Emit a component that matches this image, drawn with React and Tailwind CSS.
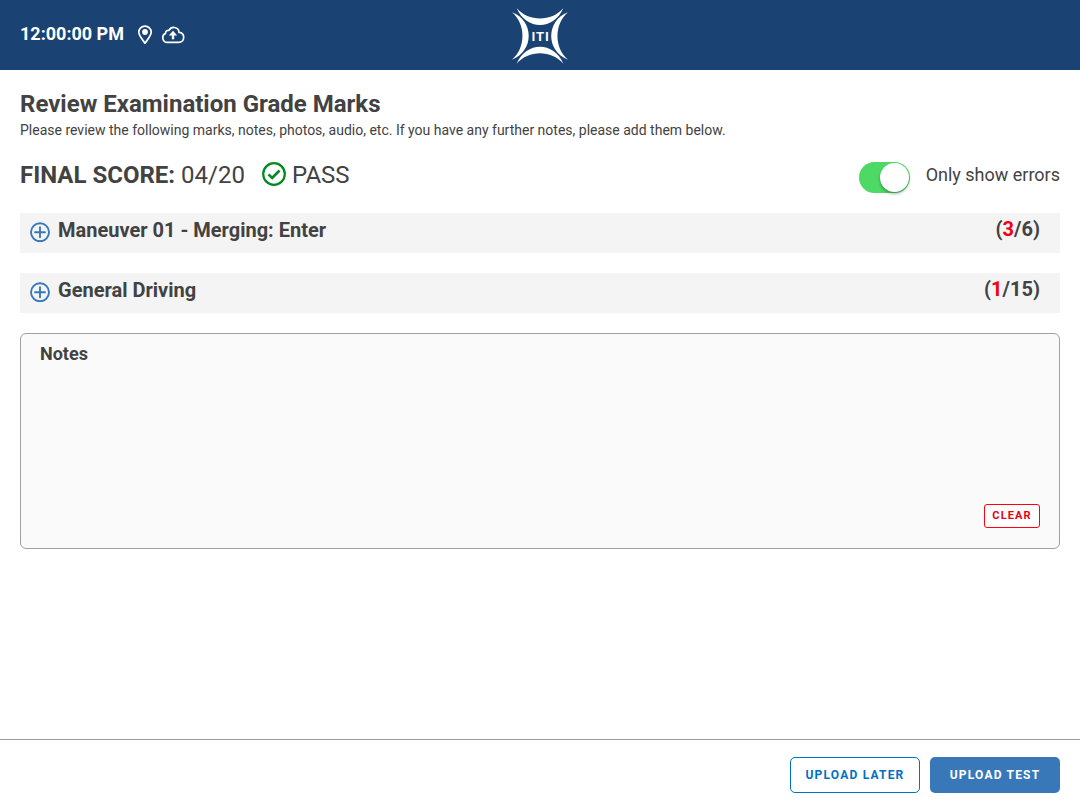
import { useState } from 'react';

const sections = [
  { id: 'maneuver-01', title: 'Maneuver 01 - Merging: Enter', errors: 3, total: 6 },
  { id: 'general', title: 'General Driving', errors: 1, total: 15 },
];

function Logo() {
  return (
    <svg className="size-[60px]" viewBox="30 15 180 180" fill="#fff" role="img" aria-label="ITI">
      <path d="M50 24 C85 66 155 66 190 24 C162 92 78 92 50 24Z" />
      <path d="M50 191 C85 149 155 149 190 191 C162 123 78 123 50 191Z" />
      <path d="M36 37 C78 72 78 144 36 179 C103 154 103 62 36 37Z" />
      <path d="M204 37 C162 72 162 144 204 179 C137 154 137 62 204 37Z" />
      <g fontSize="39" fontWeight="700" textAnchor="middle">
        <text x="100" y="122">I</text>
        <text x="120" y="122">T</text>
        <text x="141" y="122">I</text>
      </g>
    </svg>
  );
}

function PinIcon() {
  return (
    <svg className="h-5 w-4" viewBox="0 0 16 20" fill="none" stroke="#fff" strokeWidth="1.700" aria-hidden="true">
      <path d="M8 18.200C5.600 14.600 1.800 10.800 1.800 7.300a6.200 6.200 0 0 1 12.400 0c0 3.500-3.800 7.300-6.200 10.900Z" strokeLinejoin="round" />
      <circle cx="8" cy="7" r="2.900" fill="#fff" stroke="none" />
    </svg>
  );
}

function CloudIcon() {
  return (
    <svg className="h-5 w-6" viewBox="0 0 24 20" fill="none" stroke="#fff" strokeWidth="1.700" aria-hidden="true">
      <path d="M6.300 17.400a4.700 4.700 0 0 1-1.700-9C4.300 6.200 6.200 4.900 8 5.400 9.300 2.900 11.500 2.100 13.600 2.500c2.700.4 4.300 2.400 4.400 4.900 2.700.2 4.700 2.200 4.700 4.900 0 2.900-2.100 5.100-5 5.100Z" strokeLinejoin="round" />
      <path d="M12 14.300V8" strokeWidth="2.400" />
      <path d="M7.800 10.600 12 5.800l4.200 4.800Z" fill="#fff" stroke="none" />
    </svg>
  );
}

function PassIcon() {
  return (
    <svg className="size-6" viewBox="0 0 24 24" fill="none" stroke="#008a20" aria-hidden="true">
      <circle cx="12" cy="12" r="10.800" strokeWidth="2.200" />
      <path d="M6.500 12.300l3.700 3.700 7.300-7.500" strokeWidth="2.600" />
    </svg>
  );
}

function PlusIcon() {
  return (
    <svg className="size-5" viewBox="0 0 20 20" fill="none" stroke="#3878b8" strokeWidth="1.900" aria-hidden="true">
      <circle cx="10" cy="10.300" r="9" />
      <path d="M10 5.300v10M5 10.300h10" strokeLinecap="round" />
    </svg>
  );
}

function SectionRow({ section }) {
  return (
    <li className="flex h-10 items-start justify-between bg-[#f4f4f4] pr-5 pl-2.5 text-xl font-bold">
      <button type="button" className="flex items-start gap-2 text-left">
        <span className="pt-[9px]">
          <PlusIcon />
        </span>
        <span className="pt-[3px] leading-7">{section.title}</span>
      </button>
      <span className="pt-0.5 leading-7">
        (<span className="text-[#f2000f]">{section.errors}</span>/{section.total})
      </span>
    </li>
  );
}

export default function App() {
  const [onlyErrors, setOnlyErrors] = useState(true);
  const [notes, setNotes] = useState('');

  const visible = onlyErrors ? sections.filter((s) => s.errors > 0) : sections;

  return (
    <div className="flex min-h-screen flex-col bg-white font-[Roboto,sans-serif] text-[#424242]">
      <header className="grid h-[70px] grid-cols-[1fr_auto_1fr] items-center bg-[#1a4272] px-5 text-white">
        <div className="flex items-center">
          <time className="pb-0.5 text-lg font-bold">12:00:00 PM</time>
          <span className="ml-[13px] flex items-center gap-2">
            <PinIcon />
            <CloudIcon />
          </span>
        </div>
        <Logo />
      </header>

      <main className="flex-1 px-5 pt-5">
        <h1 className="text-2xl leading-7 font-bold">Review Examination Grade Marks</h1>
        <p className="mt-0.5 text-sm">
          Please review the following marks, notes, photos, audio, etc. If you have any further notes, please add them below.
        </p>

        <div className="mt-5 flex items-start justify-between">
          <div className="flex items-start text-2xl leading-[30px]">
            <p>
              <strong className="font-bold">FINAL SCORE:</strong> 04/20
            </p>
            <p className="ml-[17px] flex items-start gap-1.5">
              <span className="pt-0.5">
                <PassIcon />
              </span>
              PASS
            </p>
          </div>
          <label className="flex items-start gap-4 text-lg leading-[30px]">
            <input
              type="checkbox"
              role="switch"
              checked={onlyErrors}
              onChange={(e) => setOnlyErrors(e.target.checked)}
              className="mt-0.5 h-[31px] w-[51px] cursor-pointer appearance-none rounded-full bg-gray-300 p-px before:block before:size-[29px] before:rounded-full before:bg-white before:shadow-[0_2px_3px_rgba(0,0,0,0.3)] checked:bg-[#4cd964] checked:before:ml-5"
            />
            Only show errors
          </label>
        </div>

        <ul className="mt-5 flex flex-col gap-5">
          {visible.map((section) => (
            <SectionRow key={section.id} section={section} />
          ))}
        </ul>

        <div className="mt-5 flex h-54 flex-col rounded-md border border-[#a0a0a0] bg-[#fafafa] px-[19px] pt-1.5 pb-5">
          <label htmlFor="notes" className="text-lg leading-7 font-bold">Notes</label>
          <textarea
            id="notes"
            value={notes}
            onChange={(e) => setNotes(e.target.value)}
            className="w-full flex-1 resize-none bg-transparent text-base outline-none"
          />
          <button
            type="button"
            onClick={() => setNotes('')}
            className="h-6 w-14 self-end rounded-[3px] border border-[#ff0010] bg-white text-[11px] font-bold tracking-widest text-[#e60012]"
          >
            CLEAR
          </button>
        </div>
      </main>

      <footer className="flex justify-end gap-2.5 border-t border-[#999] px-5 py-[17px] text-xs font-bold tracking-widest">
        <button type="button" className="h-9 w-[130px] rounded-[5px] border border-[#0071c1] text-[#0071c1]">
          UPLOAD LATER
        </button>
        <button type="button" className="h-9 w-[130px] rounded-[5px] bg-[#3878b8] text-white">
          UPLOAD TEST
        </button>
      </footer>
    </div>
  );
}
